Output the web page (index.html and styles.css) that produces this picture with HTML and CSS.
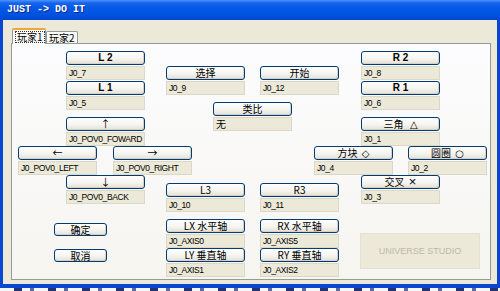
FILE: index.html
```html
<!DOCTYPE html>
<html lang="zh-CN">
<head>
    <meta charset="UTF-8">
    <title>JUST -&gt; DO IT</title>
    <link rel="stylesheet" href="styles.css">
</head>
<body>

    <div class="window">
        <div class="titlebar">JUST -&gt; DO IT</div>

        <div class="client">
            <div class="tabs">
                <div class="tab active"><span>玩家1</span></div>
                <div class="tab">玩家2</div>
            </div>

            <div class="panel">
                <!-- 左边: 肩键 + 方向键 -->
                <div class="field f-l2"><div class="btn bold">L 2</div><div class="val">J0_7</div></div>
                <div class="field f-l1"><div class="btn bold">L 1</div><div class="val">J0_5</div></div>
                <div class="field f-up"><div class="btn">↑</div><div class="val">J0_POV0_FOWARD</div></div>
                <div class="field f-left"><div class="btn">←</div><div class="val">J0_POV0_LEFT</div></div>
                <div class="field f-right"><div class="btn">→</div><div class="val">J0_POV0_RIGHT</div></div>
                <div class="field f-down"><div class="btn">↓</div><div class="val">J0_POV0_BACK</div></div>

                <!-- 中间 -->
                <div class="field f-select"><div class="btn">选择</div><div class="val">J0_9</div></div>
                <div class="field f-start"><div class="btn">开始</div><div class="val">J0_12</div></div>
                <div class="field f-analog"><div class="btn">类比</div><div class="val cn">无</div></div>
                <div class="field f-l3"><div class="btn">L3</div><div class="val">J0_10</div></div>
                <div class="field f-r3"><div class="btn">R3</div><div class="val">J0_11</div></div>
                <div class="field f-lx"><div class="btn">LX 水平轴</div><div class="val">J0_AXIS0</div></div>
                <div class="field f-ly"><div class="btn">LY 垂直轴</div><div class="val">J0_AXIS1</div></div>
                <div class="field f-rx"><div class="btn">RX 水平轴</div><div class="val">J0_AXIS5</div></div>
                <div class="field f-ry"><div class="btn">RY 垂直轴</div><div class="val">J0_AXIS2</div></div>

                <!-- 右边: 肩键 + 动作键 -->
                <div class="field f-r2"><div class="btn bold">R 2</div><div class="val">J0_8</div></div>
                <div class="field f-r1"><div class="btn bold">R 1</div><div class="val">J0_6</div></div>
                <div class="field f-tri"><div class="btn">三角&nbsp; <span class="sym">△</span></div><div class="val">J0_1</div></div>
                <div class="field f-sq"><div class="btn">方块 <span class="sym">◇</span></div><div class="val">J0_4</div></div>
                <div class="field f-ci"><div class="btn">圆圈 <span class="sym">○</span></div><div class="val">J0_2</div></div>
                <div class="field f-x"><div class="btn">交叉 <span class="sym big">×</span></div><div class="val">J0_3</div></div>

                <div class="btn small b-ok">确定</div>
                <div class="btn small b-cancel">取消</div>

                <div class="logo">UNIVERSE STUDIO</div>
            </div>
        </div>
    </div>

    <div class="desktop"></div>

</body>
</html>
```

FILE: styles.css
```css
:root {
    --xp-frame: #0a46d2;
    --face: #ece9d8;
    --btn-border: #003c74;
    --tab-border: #919b9c;
}

* {
    box-sizing: border-box;
    margin: 0;
    padding: 0;
}

body {
    width: 500px;
    height: 291px;
    overflow: hidden;
    background: #dfe6f3;
    font-family: "Liberation Sans", "Noto Sans CJK SC", sans-serif;
    font-size: 9px;
    color: #000;
}

.window {
    width: 500px;
    height: 288px;
    display: flex;
    flex-direction: column;
    background: var(--xp-frame);
    padding: 0 3px 4px 3px;
}

.titlebar {
    height: 20px;
    margin: 0 -3px;
    padding: 3px 0 0 7px;
    background: linear-gradient(#4a94ff 0, #1764ec 3px, #0558e6 40%, #0052e0 75%, #0046cf 100%);
    color: #fff;
    font-family: "Liberation Mono", monospace;
    font-weight: 700;
    font-size: 10px;
    line-height: 14px;
    text-shadow: 1px 1px 0 #0a2a8a;
}

.client {
    flex: 1;
    background: var(--face);
    padding: 8px 6px 0 8px;
}

/* 选项卡 */
.tabs {
    display: flex;
    align-items: flex-end;
    height: 15px;
    padding-left: 1px;
}

.tab {
    height: 12px;
    padding: 0 2px;
    border: 1px solid var(--tab-border);
    border-bottom: none;
    border-radius: 2px 2px 0 0;
    background: linear-gradient(#ffffff, #f3f3ef);
    font-family: "Noto Sans CJK SC", sans-serif;
    font-size: 10px;
    line-height: 11px;
    white-space: nowrap;
}

.tab.active {
    height: 16px;
    width: 34px;
    margin-bottom: -1px;
    border-top: 2px solid #f3a633;
    background: #fcfcfe;
    position: relative;
    z-index: 1;
    padding: 1px 1px 0 2px;
}

.tab.active span {
    display: inline-block;
    border: 1px dotted #333;
    line-height: 10px;
    padding: 0 1px;
}

.panel {
    position: relative;
    width: 480px;
    height: 237px;
    border: 1px solid var(--tab-border);
    background: linear-gradient(#fcfcfe, #f6f5f0);
}

/* 按键 + 值 */
.field {
    position: absolute;
    width: 79px;
    display: flex;
    flex-direction: column;
    gap: 1px;
}

.btn {
    height: 14px;
    border: 1px solid var(--btn-border);
    border-radius: 3px;
    background: linear-gradient(#ffffff 0, #f5f4ef 55%, #e3e0d6 100%);
    box-shadow: inset -1px -1px 0 #d6d0c5;
    text-align: center;
    font-family: "Noto Sans CJK SC", sans-serif;
    font-size: 10px;
    line-height: 11px;
    white-space: nowrap;
}

.btn.bold {
    font-family: "Liberation Sans", sans-serif;
    font-weight: 700;
    font-size: 10px;
    line-height: 12px;
}

.btn .sym {
    font-family: "DejaVu Sans", sans-serif;
    font-size: 10px;
    line-height: 10px;
    margin-left: 2px;
}

.btn .sym.big {
    font-family: "Liberation Sans", sans-serif;
    font-size: 13px;
    line-height: 10px;
}

.val {
    height: 14px;
    padding-left: 2px;
    border: 1px solid #dcd8c9;
    background: var(--face);
    font-size: 8.5px;
    line-height: 12px;
    letter-spacing: -0.4px;
    white-space: nowrap;
}

.val.cn {
    font-family: "Noto Sans CJK SC", sans-serif;
    font-size: 10px;
    letter-spacing: 0;
}

.f-l2 { left: 54px; top: 7px; }
.f-l1 { left: 54px; top: 37px; }
.f-up { left: 54px; top: 73px; }
.f-left { left: 6px; top: 102px; }
.f-right { left: 101px; top: 102px; }
.f-down { left: 54px; top: 131px; }

.f-select { left: 154px; top: 22px; }
.f-start { left: 248px; top: 22px; }
.f-analog { left: 201px; top: 58px; }
.f-l3 { left: 154px; top: 139px; }
.f-r3 { left: 248px; top: 139px; }
.f-lx { left: 154px; top: 175px; }
.f-ly { left: 154px; top: 204px; }
.f-rx { left: 248px; top: 175px; }
.f-ry { left: 248px; top: 204px; }

.f-r2 { left: 349px; top: 7px; }
.f-r1 { left: 349px; top: 37px; }
.f-tri { left: 349px; top: 73px; }
.f-sq { left: 302px; top: 102px; }
.f-ci { left: 396px; top: 102px; }
.f-x { left: 349px; top: 131px; }

.btn.small {
    position: absolute;
    width: 53px;
    height: 13px;
}

.b-ok { left: 42px; top: 179px; }
.b-cancel { left: 42px; top: 205px; }

.logo {
    position: absolute;
    left: 348px;
    top: 189px;
    width: 120px;
    height: 36px;
    border: 1px solid #e4e1d3;
    background: var(--face);
    color: #bcb8ac;
    font-size: 9px;
    line-height: 34px;
    text-align: center;
}

.desktop {
    height: 3px;
    background: repeating-linear-gradient(90deg, #f4f6fa 0, #f4f6fa 14px, #23346e 14px, #23346e 22px, #f4f6fa 22px, #f4f6fa 30px, #5b6a98 30px, #5b6a98 34px);
}
```
